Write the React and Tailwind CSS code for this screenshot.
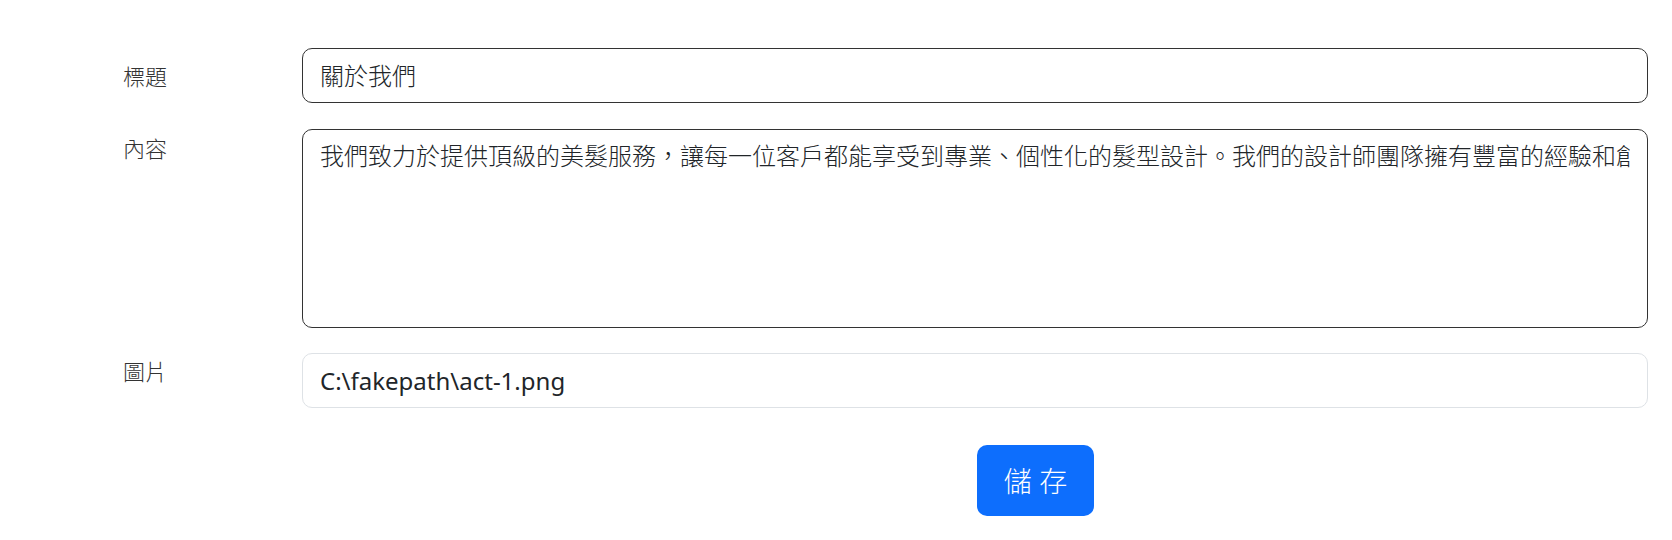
const content =
  "我們致力於提供頂級的美髮服務，讓每一位客戶都能享受到專業、個性化的髮型設計。我們的設計師團隊擁有豐富的經驗和創意，致力於為您打造最適合的造型。";

export default function App() {
  return (
    <div className="min-h-[540px] bg-white pt-[48px] pl-[123px] pr-[24px] text-[#212529] font-['Noto_Sans','Noto_Sans_CJK_TC',sans-serif]">
      {/* 標題 */}
      <div className="flex">
        <label className="w-[179px] shrink-0 pt-[12px] text-[22px] font-light leading-[33px] text-[#333]">標題</label>
        <div className="flex h-[55px] flex-1 items-center rounded-[10px] border border-[#333] px-[17px] text-[24px] font-light leading-[36px]">
          關於我們
        </div>
      </div>

      {/* 內容 */}
      <div className="mt-[26px] flex">
        <label className="w-[179px] shrink-0 pt-[3px] text-[22px] font-light leading-[33px] text-[#333]">內容</label>
        <div className="h-[199px] flex-1 overflow-hidden whitespace-nowrap rounded-[10px] border border-[#333] px-[17px] pt-[8px] text-[24px] font-light leading-[36px]">
          <div className="overflow-hidden">{content}</div>
        </div>
      </div>

      {/* 圖片 */}
      <div className="mt-[25px] flex">
        <label className="w-[179px] shrink-0 pt-[2px] text-[22px] font-light leading-[33px] text-[#333]">圖片</label>
        <div className="flex h-[55px] flex-1 items-center rounded-[10px] border border-[#dee2e6] px-[17px] text-[24px] leading-[36px]">
          C:\fakepath\act-1.png
        </div>
      </div>

      {/* 儲存 */}
      <div className="mt-[37px] flex pl-[854px]">
        <button className="h-[71px] w-[117px] rounded-[10px] bg-[#0d6efd] text-[28px] font-light leading-[42px] text-white">
          儲 存
        </button>
      </div>
    </div>
  );
}
